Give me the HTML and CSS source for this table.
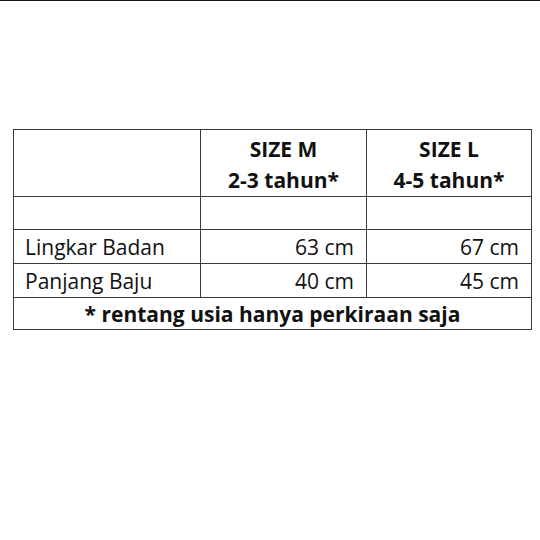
FILE: index.html
```html
<!DOCTYPE html>
<html>
<head>
<meta charset="utf-8">
<link rel="stylesheet" href="styles.css">
</head>
<body>
<div class="topline"></div>
<table class="size-table">
  <colgroup>
    <col class="c1"><col class="c2"><col class="c3">
  </colgroup>
  <tr class="head">
    <td></td>
    <td class="hd">SIZE M<br>2-3 tahun*</td>
    <td class="hd">SIZE L<br>4-5 tahun*</td>
  </tr>
  <tr class="empty"><td></td><td></td><td></td></tr>
  <tr class="row">
    <td class="lbl">Lingkar Badan</td>
    <td class="num">63 cm</td>
    <td class="num">67 cm</td>
  </tr>
  <tr class="row">
    <td class="lbl">Panjang Baju</td>
    <td class="num">40 cm</td>
    <td class="num">45 cm</td>
  </tr>
  <tr class="foot">
    <td colspan="3">* rentang usia hanya perkiraan saja</td>
  </tr>
</table>
</body>
</html>
```
FILE: styles.css
```css
html, body {
  margin: 0;
  padding: 0;
  background: #ffffff;
}
body {
  font-family: "Open Sans", "Liberation Sans", sans-serif;
  color: #111111;
}
.topline {
  height: 1px;
  background: #111111;
}
.size-table {
  margin: 128px 0 0 13px;
  border-collapse: collapse;
  table-layout: fixed;
  width: 518px;
  border: 1px solid #555555;
}
.c1 { width: 187px; }
.c2 { width: 166px; }
.c3 { width: 165px; }
.size-table td {
  border: 1px solid #3a3a3a;
  padding: 0 11px;
  font-size: 21px;
  line-height: 24px;
  vertical-align: middle;
}
.size-table .head td { height: 62px; }
.size-table .hd {
  text-align: center;
  font-weight: 700;
  line-height: 31px;
  vertical-align: top;
  padding-top: 4px;
  padding-bottom: 0;
}
.size-table .empty td { height: 32px; }
.size-table .row td { height: 33px; }
.size-table .num { text-align: right; padding-right: 12px; }
.size-table .foot td {
  height: 31px;
  text-align: center;
  font-weight: 700;
}
```
